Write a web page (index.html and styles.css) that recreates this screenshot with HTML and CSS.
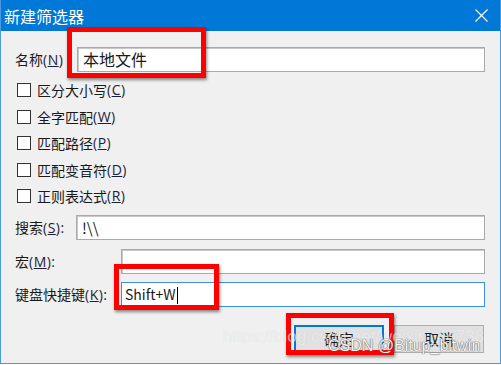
FILE: index.html
```html
<!DOCTYPE html>
<html lang="zh-CN">
<head>
    <meta charset="UTF-8">
    <title>新建筛选器</title>
    <link rel="stylesheet" href="styles.css">
</head>
<body>
    <div class="window">
        <div class="titlebar">
            <span class="title">新建筛选器</span>
            <span class="close">
                <svg width="13" height="13" viewBox="0 0 13 13"><path d="M0.5 0.5 L12.5 12.5 M12.5 0.5 L0.5 12.5" stroke="#fff" stroke-width="1.2"/></svg>
            </span>
        </div>

        <div class="content">
            <div class="row">
                <label class="lbl">名称<span class="acc">(<u>N</u>)</span></label>
                <div class="field name-field">本地文件</div>
            </div>

            <div class="checks">
                <div class="check"><span class="box"></span>区分大小写<span class="acc">(<u>C</u>)</span></div>
                <div class="check"><span class="box"></span>全字匹配<span class="acc">(<u>W</u>)</span></div>
                <div class="check"><span class="box"></span>匹配路径<span class="acc">(<u>P</u>)</span></div>
                <div class="check"><span class="box"></span>匹配变音符<span class="acc">(<u>D</u>)</span></div>
                <div class="check"><span class="box"></span>正则表达式<span class="acc">(<u>R</u>)</span></div>
            </div>

            <div class="row">
                <label class="lbl">搜索<span class="acc">(<u>S</u>):</span></label>
                <div class="field search-field">!\\</div>
            </div>
            <div class="row macro-row">
                <label class="lbl">宏<span class="acc">(<u>M</u>):</span></label>
                <div class="field wide"></div>
            </div>
            <div class="row key-row">
                <label class="lbl">键盘快捷键<span class="acc">(<u>K</u>):</span></label>
                <div class="field wide focused">Shift+W<span class="caret"></span></div>
            </div>

            <div class="buttons">
                <button class="btn default">确定</button>
                <button class="btn">取消</button>
            </div>
        </div>

        <div class="mark mark-name"></div>
        <div class="mark mark-key"></div>
        <div class="mark mark-ok"></div>

        <div class="watermark url">https://blog.csdn.net/weixin_44738</div>
        <div class="watermark csdn">CSDN @Bitup_bitwin</div>
    </div>
</body>
</html>
```

FILE: styles.css
```css
body {
    margin: 0;
    background-color: #fff;
    font-family: "Noto Sans CJK SC", "Noto Sans", sans-serif;
    color: #1a1a1a;
}
.window {
    position: relative;
    width: 501px;
    height: 364px;
    box-sizing: border-box;
    background-color: #f0f0f0;
    border: 1px solid #4a9ae0;
    border-top: none;
    overflow: hidden;
}
.titlebar {
    height: 31px;
    margin: 0 -1px;
    background-color: #0078d7;
    display: flex;
    align-items: center;
    justify-content: space-between;
    padding: 0 13px 0 4px;
}
.title {
    color: #fff;
    font-size: 16px;
    line-height: 1;
}
.close {
    display: flex;
}
.content {
    padding: 16px 15px 0 14px;
}
.row {
    display: flex;
    align-items: center;
    justify-content: space-between;
    height: 25px;
}
.lbl {
    font-size: 14px;
    line-height: 1;
    white-space: nowrap;
}
/* 括号里的快捷键字母 */
.acc {
    font-family: "Open Sans", sans-serif;
    font-size: 14px;
    color: #1c1c3c;
    letter-spacing: 0.5px;
}
.field {
    height: 25px;
    box-sizing: border-box;
    background-color: #fff;
    border: 1px solid #a9a9a9;
    box-shadow: inset 1px 1px 0 #c8c8c8;
    font-size: 16px;
    line-height: 23px;
    padding-left: 5px;
}
.name-field {
    width: 408px;
}
.checks {
    margin-top: 5px;
    margin-bottom: 5px;
}
.check {
    display: flex;
    align-items: center;
    height: 26.5px;
    font-size: 14px;
    line-height: 1;
}
.box {
    width: 14px;
    height: 14px;
    box-sizing: border-box;
    border: 1px solid #333;
    background-color: #fff;
    margin: 0 6px 0 2px;
}
.search-field {
    width: 409px;
    font-size: 15px;
}
.macro-row {
    margin-top: 9px;
}
.key-row {
    margin-top: 8px;
}
.wide {
    width: 364px;
}
.focused {
    border-color: #3d8ee6;
    box-shadow: none;
    font-size: 14px;
    padding-left: 3px;
}
.caret {
    display: inline-block;
    width: 1px;
    height: 17px;
    background-color: #000;
    vertical-align: -4px;
    margin-left: 1px;
}
.buttons {
    display: flex;
    justify-content: flex-end;
    gap: 10px;
    margin-top: 18px;
    margin-right: 1px;
}
.btn {
    width: 90px;
    height: 28px;
    box-sizing: border-box;
    background-color: #e1e1e1;
    border: 1px solid #adadad;
    font-family: inherit;
    font-size: 15px;
    color: #1a1a1a;
    padding: 0;
}
.btn.default {
    border: 2px solid #0078d7;
}
.mark {
    position: absolute;
    border: 5px solid #f00;
    box-shadow: 1px 2px 3px rgba(0, 0, 0, 0.45);
}
.mark-name {
    left: 66px;
    top: 27px;
    width: 129px;
    height: 41px;
}
.mark-key {
    left: 113px;
    top: 264px;
    width: 95px;
    height: 36px;
}
.mark-ok {
    left: 285px;
    top: 313px;
    width: 98px;
    height: 32px;
}
.watermark {
    position: absolute;
    white-space: nowrap;
    font-family: "Liberation Sans", sans-serif;
}
.url {
    left: 222px;
    top: 327px;
    font-size: 17px;
    color: rgba(255, 255, 255, 0.6);
    text-shadow: 0 0 1px rgba(0, 0, 0, 0.12);
}
.csdn {
    left: 327px;
    top: 337px;
    font-size: 16px;
    color: #f4f4f4;
    text-shadow: 0 0 1px #555, 0 0 1px #555;
}
```
